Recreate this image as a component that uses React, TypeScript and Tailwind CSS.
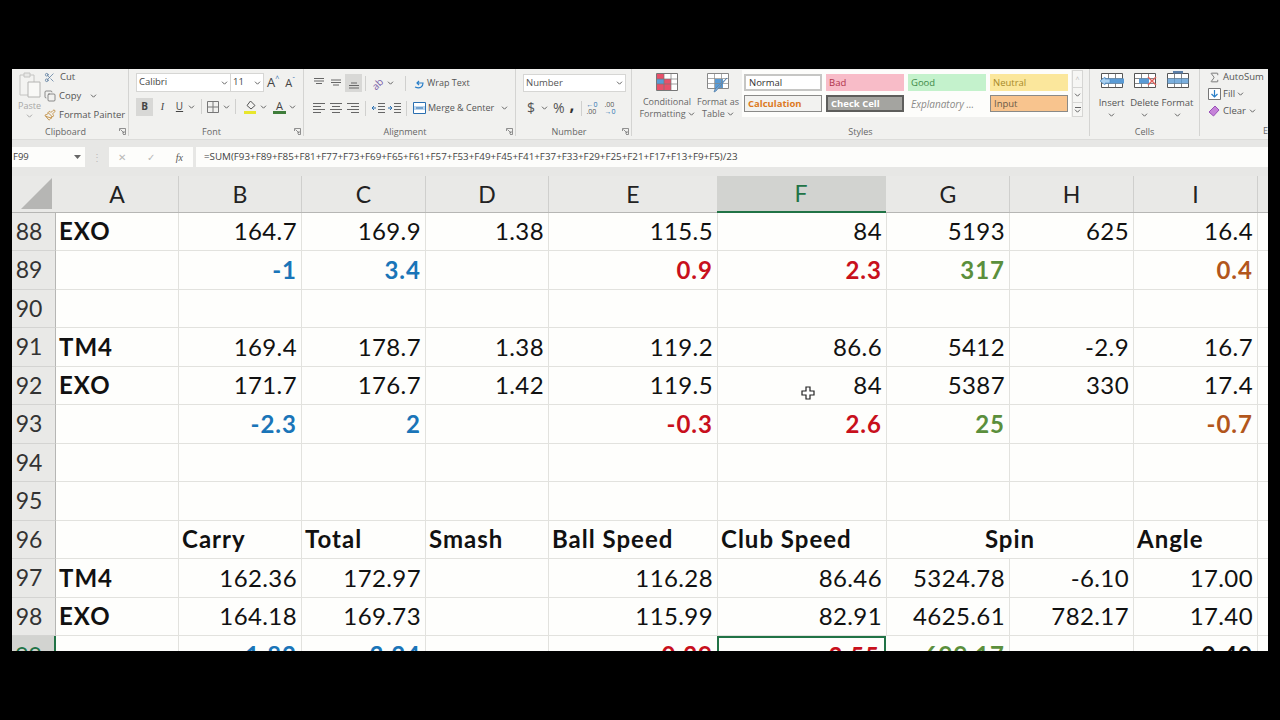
import React from 'react';
import { Scissors, Copy, Paintbrush, Sigma } from 'lucide-react';

type Cell = { t: string; c?: string; left?: boolean; bold?: boolean; span?: number };

const BLUE = 'text-[#1a75b8]';
const RED = 'text-[#c8101c]';
const GREEN = 'text-[#5b8f3c]';
const BROWN = 'text-[#b2561c]';
const BLACK = 'text-[#111]';

const num = (t: string) => ({ t });
const diff = (t: string, c: string) => ({ t, c, bold: true });
const name = (t: string) => ({ t, left: true, bold: true });
const head = (t: string) => ({ t, left: true, bold: true });
const none = { t: '' };

const rows: { n: number; cells: Cell[] }[] = [
  { n: 88, cells: [name('EXO'), num('164.7'), num('169.9'), num('1.38'), num('115.5'), num('84'), num('5193'), num('625'), num('16.4')] },
  { n: 89, cells: [none, diff('-1', BLUE), diff('3.4', BLUE), none, diff('0.9', RED), diff('2.3', RED), diff('317', GREEN), none, diff('0.4', BROWN)] },
  { n: 90, cells: [none, none, none, none, none, none, none, none, none] },
  { n: 91, cells: [name('TM4'), num('169.4'), num('178.7'), num('1.38'), num('119.2'), num('86.6'), num('5412'), num('-2.9'), num('16.7')] },
  { n: 92, cells: [name('EXO'), num('171.7'), num('176.7'), num('1.42'), num('119.5'), num('84'), num('5387'), num('330'), num('17.4')] },
  { n: 93, cells: [none, diff('-2.3', BLUE), diff('2', BLUE), none, diff('-0.3', RED), diff('2.6', RED), diff('25', GREEN), none, diff('-0.7', BROWN)] },
  { n: 94, cells: [none, none, none, none, none, none, none, none, none] },
  { n: 95, cells: [none, none, none, none, none, none, none, none, none] },
  {
    n: 96,
    cells: [none, head('Carry'), head('Total'), head('Smash'), head('Ball Speed'), head('Club Speed'), { t: 'Spin', bold: true, span: 2 }, head('Angle')],
  },
  { n: 97, cells: [name('TM4'), num('162.36'), num('172.97'), none, num('116.28'), num('86.46'), num('5324.78'), num('-6.10'), num('17.00')] },
  { n: 98, cells: [name('EXO'), num('164.18'), num('169.73'), none, num('115.99'), num('82.91'), num('4625.61'), num('782.17'), num('17.40')] },
  { n: 99, cells: [none, diff('-1.82', BLUE), diff('3.24', BLUE), none, diff('0.29', RED), diff('3.55', RED), diff('699.17', GREEN), none, diff('-0.40', BLACK)] },
];

const columns = ['A', 'B', 'C', 'D', 'E', 'F', 'G', 'H', 'I'];
const gridCols = 'grid grid-cols-[44px_123px_123px_124px_123px_169px_169px_123px_124px_124px_10px]';

const Caret = ({ className = '' }: { className?: string }) => (
  <svg width="7" height="4" viewBox="0 0 7 4" className={`shrink-0 ${className}`}>
    <path d="M1 .7l2.5 2.5L6 .7" fill="none" stroke="#666" strokeWidth="1" />
  </svg>
);

const Launcher = () => (
  <svg width="7" height="7" viewBox="0 0 7 7" className="shrink-0">
    <path d="M.5 3V.5H6.5V6.5H4M1.5 1.500L5 5M5 3v2H3" fill="none" stroke="#777" strokeWidth=".8" />
  </svg>
);

const Lines = ({ kind, className = '' }: { kind: 'left' | 'center' | 'right' | 'top' | 'middle' | 'bottom'; className?: string }) => {
  const paths = {
    left: 'M0 1.5h12M0 4.5h8M0 7.5h12M0 10.5h8',
    center: 'M0 1.5h12M2 4.5h8M0 7.5h12M2 10.5h8',
    right: 'M0 1.5h12M4 4.5h8M0 7.5h12M4 10.5h8',
    top: 'M1 1.5h10M1 4h10M3 6.5h6',
    middle: 'M1 3h10M1 5.5h10M3 8h6',
    bottom: 'M3 6h6M1 8.5h10M1 11h10',
  };
  return (
    <svg width="12" height="12" viewBox="0 0 12 12" className={`shrink-0 ${className}`}>
      <path d={paths[kind]} fill="none" stroke="#666" strokeWidth="1" />
    </svg>
  );
};

const Sep = ({ className = '' }: { className?: string }) => <div className={`w-px h-[15px] bg-[#d0d0ce] shrink-0 ${className}`} />;

const Group = ({ label, width, launcher, children }: { label: string; width: string; launcher?: boolean; children: React.ReactNode }) => (
  <div className={`${width} h-[67px] shrink-0 flex flex-col border-r border-[#d4d4d2]`}>
    <div className="h-[57px] shrink-0 flex">{children}</div>
    <div className="flex-1 flex items-center">
      <div className="flex-1 text-center text-[9px] text-[#666] leading-none">{label}</div>
      {launcher && (
        <div className="mr-[2px]">
          <Launcher />
        </div>
      )}
    </div>
  </div>
);

const ClipboardIcon = () => (
  <svg width="22" height="26" viewBox="0 0 22 26">
    <path d="M1 3h14v20H1z" fill="#f3f3f1" stroke="#c4c4c2" />
    <path d="M5 1h6v4H5z" fill="#e8e8e6" stroke="#c4c4c2" />
    <path d="M9 10h12v15H9z" fill="#f8f8f6" stroke="#b4b4b2" />
  </svg>
);

const Clipboard = () => (
  <Group label="Clipboard" width="w-[117px]" launcher>
    <div className="w-[31px] pl-[4px] pt-[3px] flex flex-col items-center">
      <ClipboardIcon />
      <div className="text-[9px] leading-none text-[#a8a8a6] mt-[3px]">Paste</div>
      <Caret className="mt-[4px] opacity-50" />
    </div>
    <div className="flex flex-col text-[9.5px] text-[#555] leading-none pl-[1px]">
      <div className="h-[16px] flex items-center gap-[3px]">
        <Scissors size={11} className="text-[#4a6f96]" strokeWidth={1.5} />
        <span className="ml-[2px]">Cut</span>
      </div>
      <div className="h-[20px] mt-px flex items-center gap-[3px]">
        <Copy size={12} className="text-[#555]" strokeWidth={1.3} />
        <span>Copy</span>
        <Caret className="ml-[6px]" />
      </div>
      <div className="h-[17px] flex items-center gap-[3px]">
        <Paintbrush size={12} className="text-[#b7791f]" strokeWidth={1.5} />
        <span>Format Painter</span>
      </div>
    </div>
  </Group>
);

const FontGroup = () => (
  <Group label="Font" width="w-[175px]" launcher>
    <div className="flex flex-col pl-[7px] pt-[4px] text-[#444]">
      <div className="flex items-center h-[19px]">
        <div className="w-[95px] h-[19px] bg-white border border-[#d6d6d4] flex items-center justify-between px-[2px] text-[9.5px]">
          <span>Calibri</span>
          <Caret />
        </div>
        <div className="w-[33px] h-[19px] bg-white border border-l-0 border-[#d6d6d4] flex items-center justify-between px-[2px] text-[9.5px]">
          <span>11</span>
          <Caret />
        </div>
        <span className="ml-[3px] text-[13px] leading-none">A</span>
        <span className="text-[7px] text-[#2a6fb0] self-start mt-[2px] leading-none">^</span>
        <span className="ml-[6px] text-[11px] leading-none">A</span>
        <span className="text-[7px] text-[#2a6fb0] self-start mt-[3px] leading-none">ˇ</span>
      </div>
      <div className="flex items-center h-[19px] mt-[5px]">
        <div className="w-[17px] h-[18px] bg-[#d8d8d6] flex items-center justify-center font-bold text-[10px]">B</div>
        <div className="w-[17px] ml-[1px] text-center text-[10px] italic font-['Liberation_Serif',serif]">I</div>
        <div className="w-[17px] text-center text-[10px] underline">U</div>
        <Caret />
        <Sep className="ml-[6px] mr-[5px]" />
        <svg width="12" height="12" viewBox="0 0 12 12" className="shrink-0">
          <path d="M.5.5h11v11H.5zM6 .5v11M.5 6h11" fill="none" stroke="#777" />
        </svg>
        <Caret className="ml-[4px]" />
        <Sep className="ml-[5px] mr-[8px]" />
        <svg width="13" height="14" viewBox="0 0 13 14" className="shrink-0">
          <path d="M6.500 1L11 5.500 7 9 3 5.500z" fill="#f3f3f1" stroke="#555" />
          <path d="M0 11h12v3H0z" fill="#e8e62c" />
        </svg>
        <Caret className="ml-[3px]" />
        <div className="ml-[6px] w-[13px] flex flex-col items-center leading-none">
          <span className="text-[11px] leading-[11px]">A</span>
          <div className="w-[13px] h-[3px] bg-[#3f7d3a]" />
        </div>
        <Caret className="ml-[3px]" />
      </div>
    </div>
  </Group>
);

const AlignmentGroup = () => (
  <Group label="Alignment" width="w-[212px]" launcher>
    <div className="flex flex-col pl-[9px] pt-[5px] text-[9px] text-[#555] whitespace-nowrap">
      <div className="flex items-center h-[18px]">
        <Lines kind="top" />
        <Lines kind="middle" className="ml-[5px]" />
        <div className="w-[17px] h-[18px] ml-[3px] bg-[#d8d8d6] flex items-center justify-center">
          <Lines kind="bottom" />
        </div>
        <Sep className="ml-[3px]" />
        <span className="w-[14px] ml-[5px] text-[#7a5ea8] text-[10px] leading-none -rotate-45">ab</span>
        <Caret className="ml-[2px]" />
        <Sep className="ml-[11px]" />
        <svg width="12" height="14" viewBox="0 0 12 14" className="shrink-0 ml-[7px]">
          <path d="M2 11c5 2 8 0 8-4H4M6 5L4 7l2 2" fill="none" stroke="#2a7fc8" strokeWidth="1.200" />
        </svg>
        <span className="ml-[2px]">Wrap Text</span>
      </div>
      <div className="flex items-center h-[18px] mt-[7px]">
        <Lines kind="left" />
        <Lines kind="center" className="ml-[5px]" />
        <Lines kind="right" className="ml-[5px]" />
        <Sep className="ml-[6px]" />
        <svg width="13" height="12" viewBox="0 0 13 12" className="shrink-0 ml-[6px]">
          <path d="M6 1.500h7M6 4.500h7M6 7.500h7M6 10.500h7" stroke="#666" />
          <path d="M4 6H0M2 4L0 6l2 2" fill="none" stroke="#2a6fb0" />
        </svg>
        <svg width="13" height="12" viewBox="0 0 13 12" className="shrink-0 ml-[3px]">
          <path d="M6 1.500h7M6 4.500h7M6 7.500h7M6 10.500h7" stroke="#666" />
          <path d="M0 6h4M2 4l2 2-2 2" fill="none" stroke="#2a6fb0" />
        </svg>
        <Sep className="ml-[5px]" />
        <svg width="13" height="12" viewBox="0 0 13 12" className="shrink-0 ml-[6px]">
          <path d="M.5.5h12v11H.5z" fill="#fff" stroke="#2a6fb0" />
          <path d="M1 4h11v4H1z" fill="#bcd6ee" />
          <path d="M3 6h7" stroke="#2a6fb0" />
        </svg>
        <span className="ml-[2px]">Merge & Center</span>
        <Caret className="ml-[7px]" />
      </div>
    </div>
  </Group>
);

const NumberGroup = () => (
  <Group label="Number" width="w-[116px]" launcher>
    <div className="flex flex-col pl-[7px] pt-[5px] text-[#555]">
      <div className="w-[103px] h-[18px] bg-white border border-[#d6d6d4] flex items-center justify-between px-[2px] text-[9.5px]">
        <span>Number</span>
        <Caret />
      </div>
      <div className="flex items-center h-[18px] mt-[7px] pl-[4px]">
        <span className="text-[14px] leading-none">$</span>
        <Caret className="ml-[6px]" />
        <span className="text-[14px] leading-none ml-[5px]">%</span>
        <span className="text-[17px] font-bold text-[#333] leading-none ml-[5px] -mt-[8px]">,</span>
        <Sep className="ml-[7px] mr-[4px]" />
        <span className="text-[7px] leading-[7px] w-[14px] text-[#2a6fb0] whitespace-nowrap">
          ←0
          <br />
          <span className="text-[#555]">.00</span>
        </span>
        <span className="text-[7px] leading-[7px] w-[14px] ml-[4px] text-[#555] whitespace-nowrap">
          .00
          <br />
          <span className="text-[#2a6fb0]">→0</span>
        </span>
      </div>
    </div>
  </Group>
);

const BigLabel = ({ width, top, bottom, icon }: { width: string; top: string; bottom?: string; icon: React.ReactNode }) => (
  <div className={`${width} shrink-0 flex flex-col items-center text-[9px] text-[#666] leading-[12px] pt-[4px]`}>
    <div className="h-[18px] mb-[5px]">{icon}</div>
    <span className="whitespace-nowrap">{top}</span>
    {bottom && (
      <span className="flex items-center gap-[2px] whitespace-nowrap">
        {bottom}
        <Caret />
      </span>
    )}
  </div>
);

const CondIcon = () => (
  <svg width="22" height="18" viewBox="0 0 22 18">
    <path d="M.5.5h21v17H.5z" fill="#fff" stroke="#777" />
    <path d="M1 1h7v5H1zM8 6h7v5H8zM1 11h14v6H1z" fill="#e8506a" />
    <path d="M1 6h7v5H1z" fill="#5a9bd5" />
    <path d="M8 1v16M15 1v16M1 6h20M1 11h20" stroke="#777" strokeWidth=".7" />
  </svg>
);

const TableIcon = () => (
  <svg width="22" height="20" viewBox="0 0 22 20">
    <path d="M.5.5h21v15H.5z" fill="#fff" stroke="#888" />
    <path d="M8 6h8v9H8z" fill="#5a9bd5" />
    <path d="M7.500 1v15M14.500 1v15M1 5.500h20M1 10.500h20" stroke="#888" strokeWidth=".7" />
    <path d="M20 5L9 18l-2 1 1-3z" fill="#7aa9d6" stroke="#4a7aa8" strokeWidth=".7" />
  </svg>
);

const StyleCell = ({ className, label }: { className: string; label: string }) => (
  <div className={`w-[78px] h-[17px] shrink-0 flex items-center pl-[3px] text-[9.5px] leading-none ${className}`}>{label}</div>
);

const Styles = () => (
  <Group label="Styles" width="w-[458px]">
    <div className="w-[110px] shrink-0 flex">
      <BigLabel width="w-[70px]" top="Conditional" bottom="Formatting" icon={<CondIcon />} />
      <BigLabel width="w-[32px]" top="Format as" bottom="Table" icon={<TableIcon />} />
    </div>
    <div className="w-[329px] h-[47px] bg-[#fdfdfb] mt-[1px] px-[2px] pt-[4px] flex flex-col gap-[4px]">
      <div className="flex gap-[4px]">
        <StyleCell className="bg-white border-2 border-[#c6c6c4] text-[#333]" label="Normal" />
        <StyleCell className="bg-[#f8bcc8] text-[#b0324a]" label="Bad" />
        <StyleCell className="bg-[#c4f2cc] text-[#3f8a4a]" label="Good" />
        <StyleCell className="bg-[#fbe79c] text-[#a88a2a]" label="Neutral" />
      </div>
      <div className="flex gap-[4px]">
        <StyleCell className="bg-[#f2f2f0] border border-[#8a8a88] text-[#dd7a1e] font-bold" label="Calculation" />
        <StyleCell className="bg-[#a4a4a0] border-2 border-[#5e5e5c] text-white font-bold" label="Check Cell" />
        <StyleCell className="text-[#8a8a88] italic text-[10px]" label="Explanatory ..." />
        <StyleCell className="bg-[#f8c48e] border border-[#8a8a88] text-[#6a5a48]" label="Input" />
      </div>
    </div>
    <div className="w-[11px] h-[47px] mt-[1px] ml-[1px] shrink-0 flex flex-col border border-[#d6d6d4] bg-[#f6f6f4]">
      <div className="h-[16px] flex items-center justify-center text-[7px] text-[#bbb] leading-none">^</div>
      <div className="h-[16px] flex items-center justify-center border-y border-[#d6d6d4]">
        <Caret />
      </div>
      <div className="flex-1 flex flex-col items-center justify-center gap-px">
        <div className="w-[6px] h-px bg-[#666]" />
        <Caret />
      </div>
    </div>
  </Group>
);

const CellIcon = ({ variant }: { variant: 'insert' | 'delete' | 'format' }) => (
  <svg width="24" height="19" viewBox="0 0 24 19">
    <path d="M1.500 2.500h21v14h-21z" fill="#fff" stroke="#555" />
    <path d="M8.500 2.500v14M15.500 2.500v14M1.500 7.500h21M1.500 12.500h21" stroke="#666" strokeWidth=".8" />
    {variant === 'insert' && (
      <>
        <path d="M4 7.500h20v5H4z" fill="#5a9bd5" />
        <path d="M0 10l5-4v2h5v4H5v2z" fill="#a8d0f0" stroke="#4a8cc8" strokeWidth=".6" />
      </>
    )}
    {variant === 'delete' && (
      <>
        <path d="M6 7.500h10v5H6z" fill="#5a9bd5" />
        <path d="M15 6l8 8M23 6l-8 8" stroke="#e0605a" strokeWidth="1.400" />
      </>
    )}
    {variant === 'format' && (
      <>
        <path d="M8.500 7.500h7v5h-7zM1.500 7.500h21v5h-21z" fill="#5a9bd5" fillOpacity=".8" />
        <path d="M7 0h10v2.500H7z" fill="#5a7ea8" />
      </>
    )}
  </svg>
);

const CellButton = ({ label, variant }: { label: string; variant: 'insert' | 'delete' | 'format' }) => (
  <div className="w-[33px] shrink-0 flex flex-col items-center text-[9.5px] text-[#555] leading-none pt-[2px]">
    <CellIcon variant={variant} />
    <span className="mt-[8px]">{label}</span>
    <Caret className="mt-[5px]" />
  </div>
);

const Cells = () => (
  <Group label="Cells" width="w-[110px]">
    <div className="flex pl-[5px]">
      <CellButton label="Insert" variant="insert" />
      <CellButton label="Delete" variant="delete" />
      <CellButton label="Format" variant="format" />
    </div>
  </Group>
);

const Editing = () => (
  <div className="flex-1 h-[67px] flex flex-col text-[9.5px] text-[#555] leading-none pl-[8px]">
    <div className="h-[16px] flex items-center gap-[2px]">
      <Sigma size={13} className="text-[#555]" strokeWidth={1.4} />
      <span>AutoSum</span>
    </div>
    <div className="h-[17px] flex items-center gap-[2px]">
      <svg width="13" height="12" viewBox="0 0 13 12" className="shrink-0">
        <path d="M.5.5h12v11H.5z" fill="#fff" stroke="#777" />
        <path d="M6.500 2v7M3.500 6l3 3 3-3" fill="none" stroke="#2a7fc8" strokeWidth="1.200" />
      </svg>
      <span>Fill</span>
      <Caret />
    </div>
    <div className="h-[18px] flex items-center gap-[3px]">
      <svg width="12" height="12" viewBox="0 0 12 12" className="shrink-0">
        <path d="M7 1l4 4-5.500 6L1 7z" fill="#c583d8" stroke="#9a4fb8" />
      </svg>
      <span>Clear</span>
      <Caret />
    </div>
    <div className="flex-1 flex items-end justify-end pb-[1px] text-[9px] text-[#666]">E</div>
  </div>
);

const Ribbon = () => (
  <div className="h-[70px] bg-[#f1f1ef] flex items-start font-['Open_Sans',sans-serif]">
    <Clipboard />
    <FontGroup />
    <AlignmentGroup />
    <NumberGroup />
    <Styles />
    <Cells />
    <Editing />
  </div>
);

const FormulaBar = () => (
  <div className="h-[37px] bg-[#e7e7e5] border-t border-[#dcdcda] flex items-center font-['Open_Sans',sans-serif] text-[9.5px] text-[#444] pb-[2px]">
    <div className="w-[73px] h-[20px] bg-[#fdfdfb] flex items-center justify-between pl-[1px] pr-[4px]">
      <span>F99</span>
      <svg width="7" height="4" viewBox="0 0 7 4">
        <path d="M0 0h7L3.500 4z" fill="#666" />
      </svg>
    </div>
    <div className="w-[24px] flex justify-center text-[#bbb] text-[10px]">⋮</div>
    <div className="w-[84px] h-[20px] bg-[#fdfdfb] flex items-center justify-between pl-[9px] pr-[10px]">
      <span className="text-[#b8b8b6] text-[10px]">✕</span>
      <span className="text-[#b8b8b6] text-[10px]">✓</span>
      <span className="text-[#555] italic font-['Liberation_Serif',serif] text-[10px]">fx</span>
    </div>
    <div className="flex-1 h-[20px] ml-[3px] bg-[#fdfdfb] flex items-center pl-[8px] text-[9.8px] whitespace-nowrap">
      =SUM(F93+F89+F85+F81+F77+F73+F69+F65+F61+F57+F53+F49+F45+F41+F37+F33+F29+F25+F21+F17+F13+F9+F5)/23
    </div>
  </div>
);

const ColumnHeaders = () => (
  <div className={`${gridCols} h-[36.5px] bg-[#e9e9e7] border-b border-[#b6b6b4] text-[23px] text-[#222]`}>
    <div className="flex items-end justify-end pr-[4px] pb-[3px]">
      <svg width="31" height="31" viewBox="0 0 31 31">
        <path d="M31 0v31H0z" fill="#b6b6b4" />
      </svg>
    </div>
    {columns.map((c) => (
      <div
        key={c}
        className={
          c === 'F'
            ? 'flex items-center justify-center pr-[1px] bg-[#d2d3d0] text-[#217346] border-b-2 border-[#217346] -mb-px -ml-px mr-px'
            : 'flex items-center justify-center border-r border-[#cfcfcd]'
        }
      >
        {c}
      </div>
    ))}
    <div />
  </div>
);

const SheetRow = ({ n, cells }: { n: number; cells: Cell[] }) => {
  const selected = n === 99;
  let col = 0;
  return (
    <div className={`${gridCols} h-[38.5px] text-[24px] text-[#111] leading-none`}>
      <div
        className={
          selected
            ? 'flex items-center justify-center pr-[9px] text-[23px] tracking-normal bg-[#d2d3d0] text-[#217346] border-r-2 border-[#217346]'
            : 'flex items-center justify-center pr-[9px] text-[23px] tracking-normal bg-[#e9e9e7] text-[#333] border-b border-[#d4d4d2] border-r border-r-[#b6b6b4]'
        }
      >
        {n}
      </div>
      {cells.map((cell, i) => {
        const isF = col === 5;
        col += cell.span ?? 1;
        const align = cell.span ? 'justify-center' : cell.left ? 'justify-start pl-[3px]' : 'justify-end pr-[4px]';
        const border = selected && isF ? 'border-2 border-b-0 border-[#217346] -ml-px mr-px' : 'border-r border-b border-[#e2e2de]';
        return (
          <div
            key={i}
            className={`relative flex items-center whitespace-nowrap ${align} ${border} ${cell.span ? 'col-span-2' : ''} ${cell.c ?? ''} ${cell.bold ? 'font-bold tracking-[1px]' : 'tracking-[0.4px]'}`}
          >
            {cell.t}
            {n === 92 && isF && (
              <svg width="14" height="14" viewBox="0 0 14 14" className="absolute left-[83px] top-[19px]">
                <path d="M5 1h4v4h4v4H9v4H5V9H1V5h4z" fill="#fff" stroke="#222" strokeWidth="1.200" />
              </svg>
            )}
          </div>
        );
      })}
      <div className="border-b border-[#e2e2de]" />
    </div>
  );
};

export default function App() {
  return (
    <div className="w-[1280px] h-[720px] bg-black overflow-hidden pt-[69px] pl-[12px]">
      <div className="w-[1256px] h-[582px] overflow-hidden bg-[#fefefc] font-['Lato',sans-serif]">
        <Ribbon />
        <FormulaBar />
        <ColumnHeaders />
        {rows.map((r) => (
          <SheetRow key={r.n} n={r.n} cells={r.cells} />
        ))}
      </div>
    </div>
  );
}
